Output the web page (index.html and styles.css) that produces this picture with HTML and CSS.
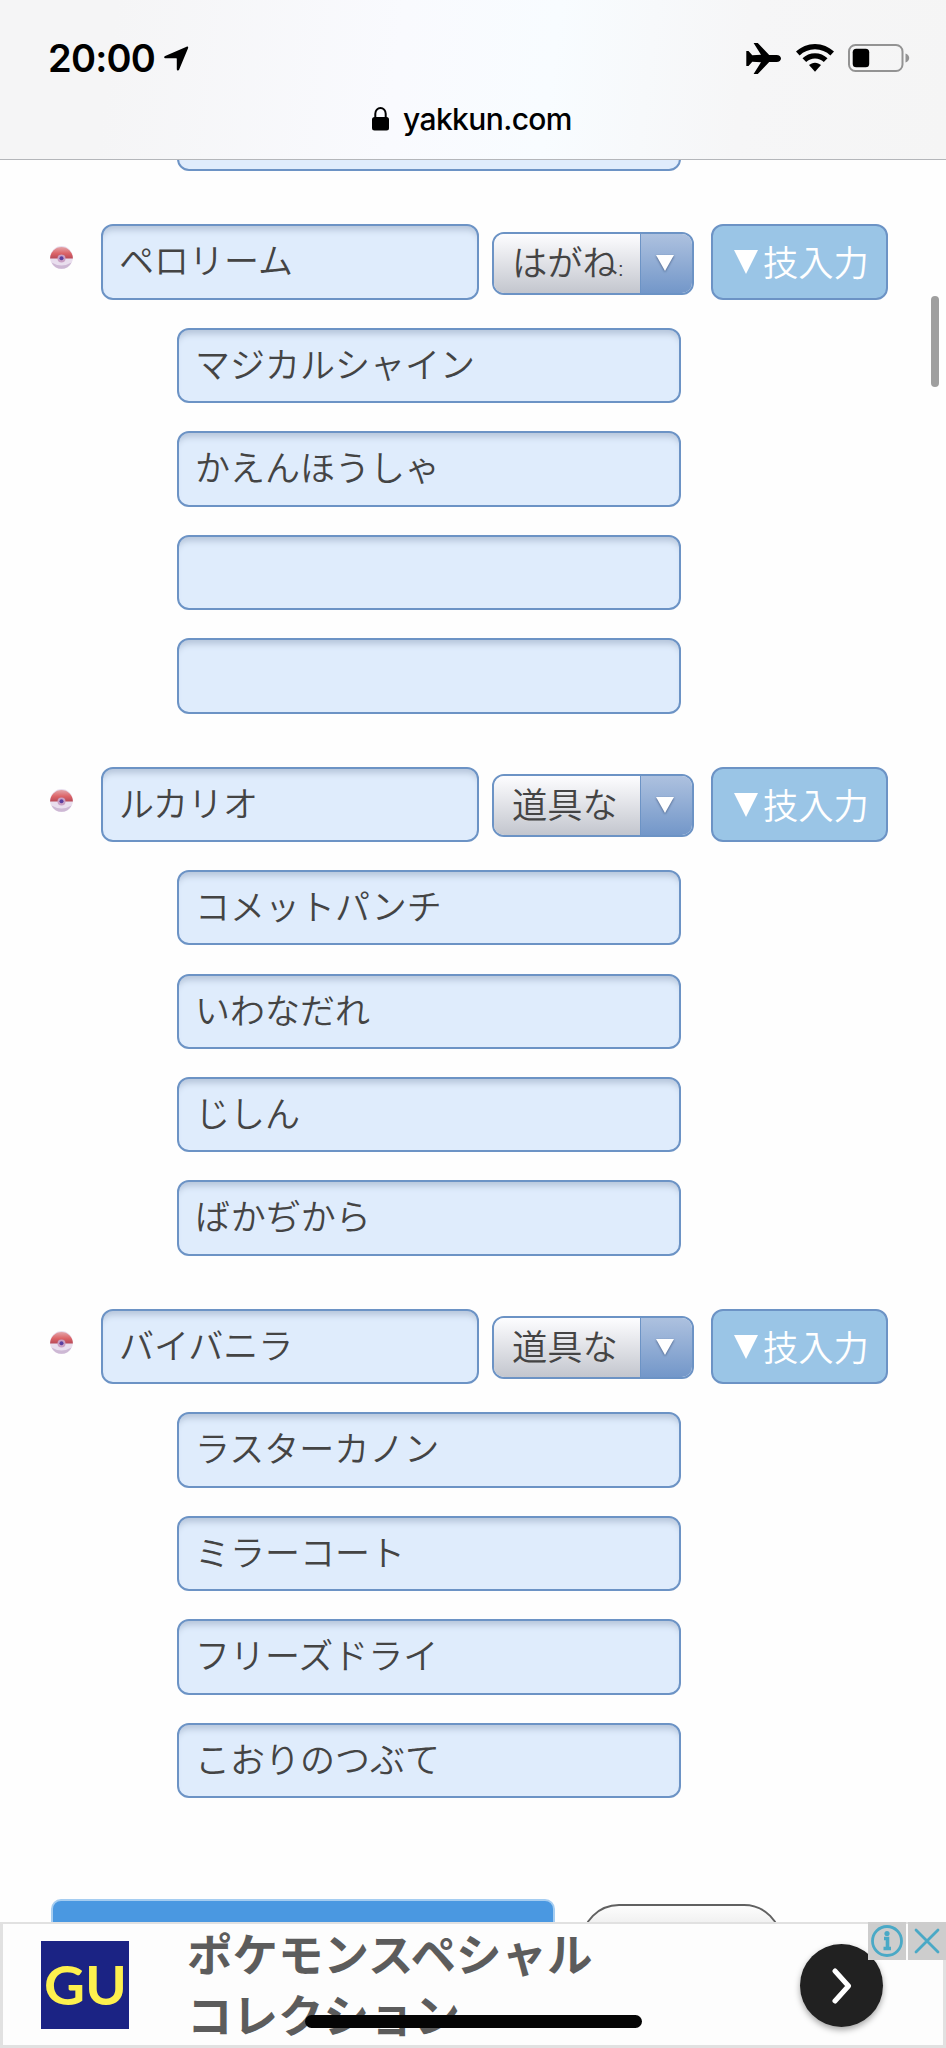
FILE: index.html
```html
<!DOCTYPE html>
<html lang="ja">
<head>
<meta charset="utf-8">
<title>yakkun.com</title>
<link rel="stylesheet" href="styles.css">
</head>
<body>
<svg class="defs" width="0" height="0">
  <defs>
    <linearGradient id="red" x1="0" y1="0" x2="0" y2="1"><stop offset="0" stop-color="#e3a3a8"/><stop offset=".55" stop-color="#dc6468"/><stop offset="1" stop-color="#b84a58"/></linearGradient>
    <symbol id="ball" viewBox="0 0 23 23">
      <circle cx="11.500" cy="11.500" r="11.400" fill="#e9deee"/>
      <path d="M.1 12.500a11.400 11.400 0 1 1 22.800 0z" fill="url(#red)"/>
      <path d="M1.500 16.500q10 6 20 0-3 6.300-10 6.300T1.500 16.500z" fill="#cdb8d4"/>
      <circle cx="11.500" cy="12.500" r="4" fill="#c9a0c4"/>
      <circle cx="11.500" cy="12.300" r="2" fill="#5b3fa0"/>
    </symbol>
  </defs>
</svg>

<header class="browser-bar">
  <div class="status">
    <div class="status-left">
      <span class="clock">20:00</span>
      <svg class="location" viewBox="0 0 26 26"><path d="M1.200 10.400 23.500.7c1.200-.4 2 .4 1.500 1.600L15.800 24.500c-.6 1.400-2.500 1.200-2.500-.4V13.300c0-.4-.2-.6-.6-.6H1.700C0 12.700-.4 11.100 1.200 10.400z"/></svg>
    </div>
    <div class="status-right">
      <svg class="plane" viewBox="0 0 35 31"><path d="M.3 8h2.200l3.800 4.300 8.700-.6L7.600 0h4.200l11.400 11.900h7.400c2.600 0 4.400 1.700 4.400 3.600s-1.800 3.600-4.400 3.600h-7.400L11.800 31H7.600L15 19.300l-8.700-.6L2.500 23H.3z"/></svg>
      <svg class="wifi" viewBox="0 0 38 28"><path d="M19 0c7.300 0 14 2.900 19 7.600l-3.600 3.800C30.300 7.500 25 5.200 19 5.200S7.700 7.500 3.600 11.400L0 7.600C5 2.900 11.700 0 19 0z"/><path d="M19 9.200c4.800 0 9.200 1.900 12.500 5l-3.700 3.900c-2.300-2.200-5.400-3.500-8.800-3.500s-6.500 1.300-8.800 3.500l-3.700-3.900c3.300-3.100 7.700-5 12.500-5z"/><path d="M19 18.700c2.300 0 4.400.9 6 2.400L19 27.700l-6-6.600c1.600-1.500 3.700-2.400 6-2.400z"/></svg>
      <svg class="battery" viewBox="0 0 62 28"><rect x="1" y="1" width="53.500" height="26" rx="6.500" fill="none" stroke="#939393" stroke-width="2"/><rect x="4.700" y="4.700" width="16.500" height="18.600" rx="3.500"/><path d="M57.500 9.500c2.700 1 3.700 2.700 3.700 4.500s-1 3.500-3.700 4.500z" fill="#939393"/></svg>
    </div>
  </div>
  <div class="address">
    <svg class="lock" viewBox="0 0 17 24"><path d="M3.300 11V6.800a5.200 5.800 0 0 1 10.400 0V11" fill="none" stroke="#000" stroke-width="2"/><rect x="0" y="10" width="17" height="13.500" rx="2.500"/></svg>
    <span class="host">yakkun.com</span>
  </div>
</header>

<main class="page">
  <section class="moves moves-prev">
    <div class="field"></div>
  </section>

  <section class="member">
    <div class="member-head">
      <svg class="ball"><use href="#ball"/></svg>
      <div class="field name">ペロリーム</div>
      <div class="select"><span class="value">はがね<i class="cut">:</i></span><span class="arrow"><svg viewBox="0 0 18 17"><path d="M0 0h18L9 16z"/></svg></span></div>
      <div class="button"><svg viewBox="0 0 24 24"><path d="M0 0h24L12 24z"/></svg>技入力</div>
    </div>
    <div class="moves">
      <div class="field">マジカルシャイン</div>
      <div class="field">かえんほうしゃ</div>
      <div class="field"></div>
      <div class="field"></div>
    </div>
  </section>

  <section class="member">
    <div class="member-head">
      <svg class="ball"><use href="#ball"/></svg>
      <div class="field name">ルカリオ</div>
      <div class="select"><span class="value">道具な</span><span class="arrow"><svg viewBox="0 0 18 17"><path d="M0 0h18L9 16z"/></svg></span></div>
      <div class="button"><svg viewBox="0 0 24 24"><path d="M0 0h24L12 24z"/></svg>技入力</div>
    </div>
    <div class="moves">
      <div class="field">コメットパンチ</div>
      <div class="field">いわなだれ</div>
      <div class="field">じしん</div>
      <div class="field">ばかぢから</div>
    </div>
  </section>

  <section class="member">
    <div class="member-head">
      <svg class="ball"><use href="#ball"/></svg>
      <div class="field name">バイバニラ</div>
      <div class="select"><span class="value">道具な</span><span class="arrow"><svg viewBox="0 0 18 17"><path d="M0 0h18L9 16z"/></svg></span></div>
      <div class="button"><svg viewBox="0 0 24 24"><path d="M0 0h24L12 24z"/></svg>技入力</div>
    </div>
    <div class="moves">
      <div class="field">ラスターカノン</div>
      <div class="field">ミラーコート</div>
      <div class="field">フリーズドライ</div>
      <div class="field">こおりのつぶて</div>
    </div>
  </section>

  <div class="actions">
    <div class="submit"></div>
    <div class="reset"></div>
  </div>
</main>

<div class="scrollbar"></div>

<aside class="ad">
  <svg class="gu" viewBox="0 0 88 88"><rect width="88" height="88" fill="#1b2384"/><text x="3" y="64" textLength="83" lengthAdjust="spacingAndGlyphs">GU</text></svg>
  <p class="ad-text">ポケモンスペシャル<br>コレクション</p>
  <div class="go"><svg viewBox="0 0 20 36"><path d="M3 3l13.500 15L3 33"/></svg></div>
  <div class="choices">
    <span class="choice"><svg viewBox="0 0 38 38"><circle cx="19" cy="19" r="14.500"/><path class="stem" d="M16 16.500h3.500v10M15.500 26.500h7.500"/><circle class="dot" cx="19" cy="11.500" r="2.600"/></svg></span>
    <span class="choice"><svg viewBox="0 0 38 38"><path d="M8 8l22 22M30 8L8 30"/></svg></span>
  </div>
</aside>
<div class="home-indicator"></div>
</body>
</html>
```
FILE: styles.css
```css
* { box-sizing: border-box; }

body {
  margin: 0;
  height: 2048px;
  overflow: hidden;
  position: relative;
  background: #fefefe;
  color: #444;
  font-family: "Liberation Sans", "Noto Sans CJK JP", sans-serif;
}

svg { display: block; flex: none; }
.defs { position: absolute; }

/* Browser chrome */
.browser-bar {
  position: fixed;
  inset: 0 0 auto;
  height: 160px;
  z-index: 2;
  padding-top: 34px;
  border-bottom: 1px solid #b4b6ba;
  background: linear-gradient(97deg, #f5f5f6 12%, #f9fafe 42%, #f8fcff 58%, #f6f6f7 78%, #f5f5f5);
  color: #000;
  font-family: Inter, sans-serif;
}
.status {
  display: flex;
  justify-content: space-between;
  height: 48px;
  padding: 0 36px 0 48px;
}
.status-left, .status-right { display: flex; align-items: center; }
.clock { font-size: 38px; font-weight: 600; line-height: 48px; letter-spacing: -.8px; width: 116px; }
.location { width: 25px; height: 25px; }
.plane { width: 35px; height: 31px; margin-right: 15px; }
.wifi { width: 38px; height: 28px; margin-right: 14px; }
.battery { width: 62px; height: 28px; }
.address { display: flex; align-items: center; height: 74px; padding-left: 372px; }
.lock { width: 17px; height: 24px; margin-right: 14px; }
.host { font-size: 30px; font-weight: 550; letter-spacing: -.6px; }

/* Party form */
.page { padding-top: 96px; }
.member { margin-top: 53px; }
.member-head {
  display: flex;
  align-items: center;
  height: 75.300px;
  padding-left: 50px;
}
.ball { width: 23px; height: 23px; margin: -8px 28px 0 0; }
.field {
  height: 75.300px;
  padding: 0 16px;
  border: 2px solid #6c93c5;
  border-radius: 12px;
  background: #dfecfc;
  box-shadow: inset 0 8px 6px -4px #b6c5da;
  font-size: 35px;
  font-weight: 350;
  line-height: 71px;
  white-space: nowrap;
}
.name { width: 378px; }
.select {
  display: flex;
  width: 202px;
  height: 63px;
  margin: 3px 17px 0 13px;
  border: 2px solid #6c93c5;
  border-radius: 12px;
  overflow: hidden;
}
.value {
  flex: 1;
  padding-left: 18px;
  background: linear-gradient(#fdfdff, #c3c6ce);
  font-size: 35.300px;
  font-weight: 350;
  line-height: 60px;
  white-space: nowrap;
}
.cut { font-size: 20px; font-style: normal; }
.arrow {
  display: flex;
  align-items: center;
  justify-content: center;
  width: 52px;
  padding-right: 4px;
  border-left: 1px solid #6c93c5;
  background: linear-gradient(#adc1df, #7397c9);
}
.arrow svg { width: 18px; height: 17px; fill: #fff; filter: drop-shadow(0 1px 1px #4a6188); }
.button {
  display: flex;
  align-items: center;
  width: 177px;
  height: 75.300px;
  padding: 0 0 2px 21px;
  border: 2px solid #6c93c5;
  border-radius: 12px;
  background: #9ac5e6;
  color: #fff;
  font-size: 35.300px;
  font-weight: 350;
  white-space: nowrap;
}
.button svg { width: 24px; height: 24px; margin: 3px 5px 0 0; fill: #fff; }
.moves {
  display: grid;
  gap: 28.200px;
  width: 504px;
  margin: 28.200px 0 0 177px;
}
.moves-prev { margin-top: 0; }
.actions { display: flex; align-items: flex-start; gap: 26px; padding: 101px 0 0 51px; }
.submit {
  width: 504px;
  height: 76px;
  border: 2px solid #a5cdf1;
  border-radius: 10px;
  background: #4a98e1;
}
.reset {
  width: 201px;
  height: 76px;
  margin-top: 5px;
  border: 2px solid #616161;
  border-radius: 38px;
  background: linear-gradient(#fdfdfd, #c8c8c8);
}

.scrollbar {
  position: fixed;
  left: 931px;
  top: 296px;
  width: 8px;
  height: 91px;
  border-radius: 4px;
  background: #9f9f9f;
}

/* Sticky banner */
.ad {
  position: fixed;
  inset: auto 0 0;
  height: 126px;
  display: flex;
  border: 3px solid #e1e1e1;
  border-width: 2px 3px 3px;
  background: #fdfdfd;
}
.gu { width: 88px; height: 88px; margin: 17px 0 0 37.500px; }
.gu text { fill: #fdf04e; font: 700 53px Lato, sans-serif; }
.ad-text {
  flex: 1;
  margin: 2px 0 0 58.500px;
  color: #5c5c5c;
  font-size: 45.500px;
  font-weight: 700;
  line-height: 61px;
  white-space: nowrap;
}
.go {
  display: flex;
  align-items: center;
  justify-content: center;
  width: 83px;
  height: 83px;
  margin: 20px 60px 0 0;
  border-radius: 50%;
  background: #212121;
  box-shadow: 0 3px 6px rgba(0, 0, 0, .35);
}
.go svg { width: 20px; height: 36px; }
.go path { fill: none; stroke: #fff; stroke-width: 5; stroke-linecap: round; stroke-linejoin: round; }
.choices { position: absolute; top: -2px; right: -3px; display: flex; gap: 2px; }
.choice { width: 38px; height: 38px; background: #cdcdcd; }
.choice svg { fill: none; stroke: #4aa9c6; stroke-width: 2.800; stroke-linecap: round; }
.choice .stem { stroke-width: 3.600; stroke-linecap: butt; }
.choice .dot { fill: #4aa9c6; stroke: none; }
.home-indicator {
  position: fixed;
  left: 305px;
  top: 2015px;
  width: 337px;
  height: 13px;
  border-radius: 7px;
  background: #050505;
}
```
